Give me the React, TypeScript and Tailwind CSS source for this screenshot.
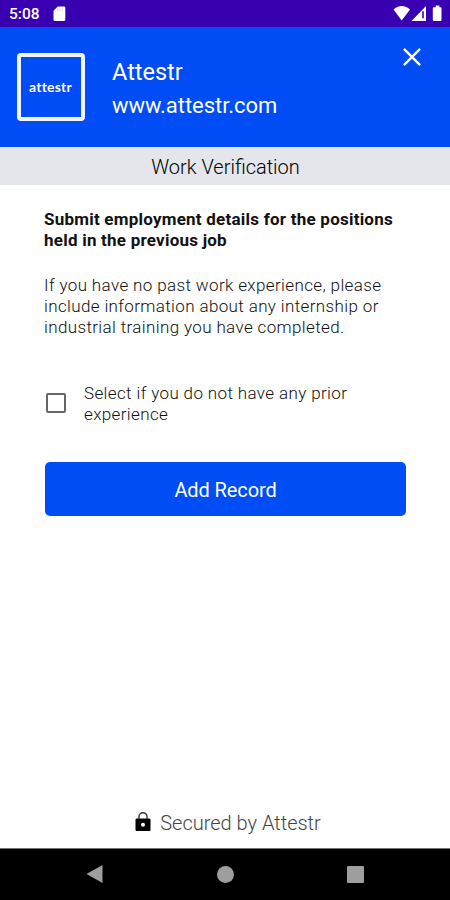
import React from 'react';

const StatusBar: React.FC = () => (
  <div className="flex h-[27px] shrink-0 items-center bg-[#3900b1] pl-[9px] text-white">
    <span className="w-[44px] whitespace-nowrap pt-[3px] text-[15.5px] font-medium leading-none">5:08</span>
    <svg width="13" height="16" viewBox="0 0 13 16" fill="currentColor">
      <path d="M4.8 0.5h6.2A1.3 1.3 0 0 1 12.3 1.8v11.9a1.3 1.3 0 0 1-1.3 1.3H1.8A1.3 1.3 0 0 1 .5 13.7V4.8Z" />
      <path d="M4.5 3v1.8M6.8 3v1.8M9.1 3v1.8" stroke="#d9cdf0" strokeWidth="1" />
    </svg>
    <svg className="ml-auto" width="57" height="27" viewBox="0 0 57 27" fill="currentColor">
      {/* wifi, signal, battery */}
      <path d="M0.5 9.6C5 4.9 12.5 4.9 17 9.6L8.7 20.5Z" />
      <path d="M33 6v15H18.5Z" />
      <path d="M30 11.2v7" stroke="#3900b1" strokeWidth="1.6" />
      <path d="M42.7 6.2V5.6h3.6v1.6h1.2a1 1 0 0 1 1 1v11.8a1 1 0 0 1-1 1h-6.7a1 1 0 0 1-1-1V8.2a1 1 0 0 1 1-1h1.9Z" />
    </svg>
  </div>
);

const Header: React.FC = () => (
  <header className="flex h-[120px] shrink-0 items-start bg-[#004df5] pl-[17px] pr-[28px] text-white">
    <div className="mt-[26px] flex h-[68px] w-[68px] items-center justify-center rounded-[4px] border-4 border-[#f1f3ff]">
      <span className="pr-px font-['Lato',sans-serif] text-[14px] font-bold leading-none tracking-[0.2px]">attestr</span>
    </div>
    <div className="ml-[27px] mt-[29px] text-[22px] leading-[33px]">
      <div className="text-[23.5px]">Attestr</div>
      <div className="tracking-[-0.05px]">www.attestr.com</div>
    </div>
    <button aria-label="Close" className="ml-auto mt-[20px]">
      <svg width="20" height="20" viewBox="0 0 21 21" fill="none" stroke="currentColor" strokeWidth="2.5">
        <path d="M2 2l17 17M19 2L2 19" />
      </svg>
    </button>
  </header>
);

const NavBar: React.FC = () => (
  <nav className="flex h-[52px] shrink-0 items-center justify-between border-t border-[#6f7673] bg-black px-[86px] pb-px text-[#9e9e9e]">
    <svg width="17" height="18" viewBox="0 0 17 18" fill="currentColor">
      <path d="M0.5 9L16.5 0v18Z" />
    </svg>
    <div className="h-[17px] w-[17px] rounded-full bg-[#9e9e9e]" />
    <div className="h-[17px] w-[17px] rounded-[1px] bg-[#9e9e9e]" />
  </nav>
);

export default function App() {
  return (
    <div className="flex h-[900px] w-[450px] flex-col overflow-hidden bg-white font-['Roboto',sans-serif]">
      <StatusBar />
      <Header />
      <div className="flex h-[38px] shrink-0 items-center justify-center bg-[#e5e6eb] pl-px pt-[2px] text-[20px] font-light text-black">
        Work Verification
      </div>

      <main className="flex flex-1 flex-col pl-[44px] pr-[44px] pt-[24px] text-[17px] leading-[21px] text-[#111]">
        <h1 className="whitespace-nowrap font-bold tracking-[0.23px]">
          Submit employment details for the positions
          <br />
          held in the previous job
        </h1>
        <p className="mt-[24px] whitespace-nowrap font-light tracking-[0.37px]">
          If you have no past work experience, please
          <br />
          include information about any internship or
          <br />
          industrial training you have completed.
        </p>
        <label className="mt-[45px] flex items-center font-light tracking-[0.37px]">
          <span className="mb-[3px] ml-[2px] mr-[18px] h-[20px] w-[20px] rounded-[2px] border-2 border-[#666]" />
          <span className="whitespace-nowrap">
            Select if you do not have any prior
            <br />
            experience
          </span>
        </label>
        <button className="ml-px mt-[37px] h-[54px] w-[361px] rounded-[5px] bg-[#004df5] pt-[2px] text-[20px] tracking-[-0.1px] text-white">
          Add Record
        </button>

        <div className="mt-auto flex h-[50px] items-center justify-center pl-[6px] text-[20px] font-light text-[#444]">
          <svg className="mb-[2px] mr-[9px]" width="16" height="20" viewBox="0 0 16 20">
            <rect x="0.5" y="6.5" width="15" height="12.5" rx="1.2" fill="#000" />
            <path d="M4 7V4.4a4 3.6 0 0 1 8 0V7" fill="none" stroke="#333" strokeWidth="1.4" />
            <circle cx="8" cy="12.7" r="2" fill="#fff" />
          </svg>
          Secured by Attestr
        </div>
      </main>
      <NavBar />
    </div>
  );
}
